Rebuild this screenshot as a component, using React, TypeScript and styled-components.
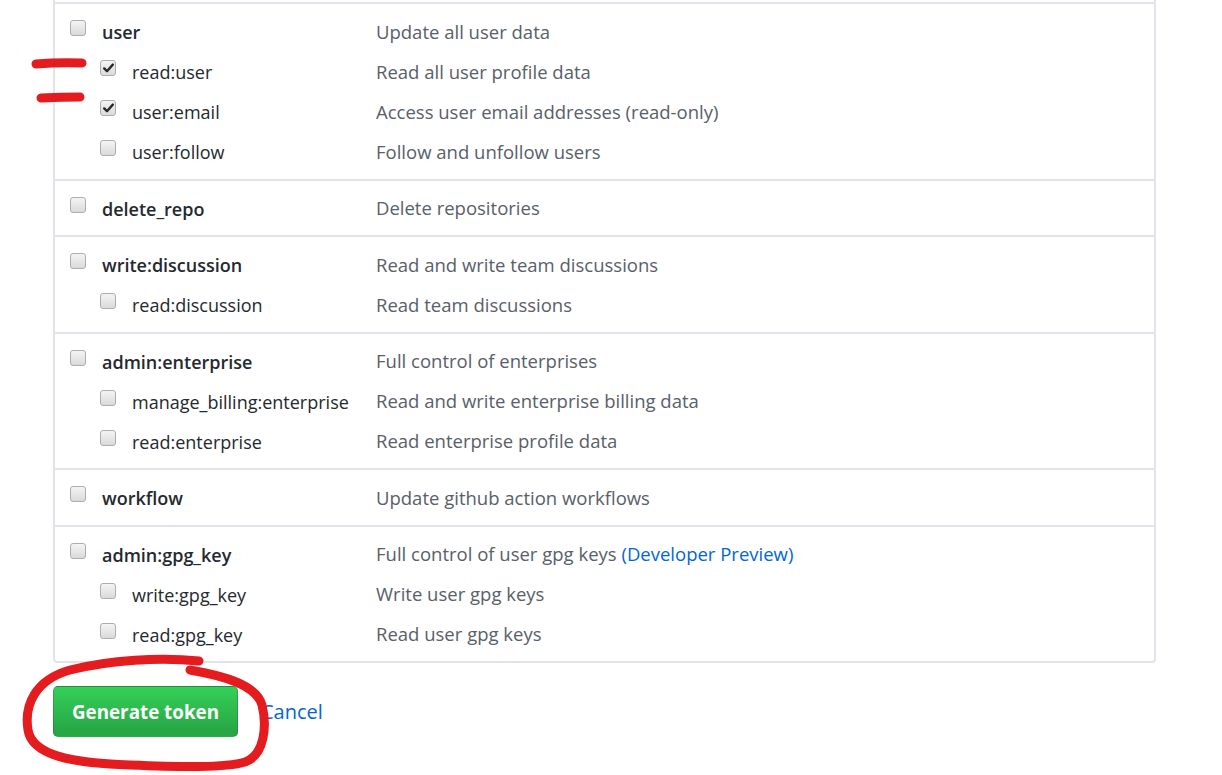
import React from "react";
import styled, { createGlobalStyle } from "styled-components";

const GlobalStyle = createGlobalStyle`
  html, body { margin: 0; padding: 0; background: #fff; }
  body { font-family: "Open Sans", "Noto Sans", Arial, sans-serif; color: #24292e; }
`;

const Page = styled.div`
  position: relative;
  width: 1222px;
  height: 775px;
  overflow: hidden;
  padding-left: 53px;
  box-sizing: border-box;
`;

const Box = styled.div`
  width: 1103px;
  box-sizing: border-box;
  border: 2px solid #e1e4e8;
  border-top: none;
  border-radius: 0 0 4px 4px;
  padding-top: 2px;
`;

const Section = styled.div<{ $first?: boolean }>`
  padding: 8px 0 6.5px;
  border-top: ${(p) => (p.$first ? "2px solid #e1e4e8" : "none")};
  border-bottom: 2px solid #e1e4e8;
  &:last-child { border-bottom: none; }
`;

const Row = styled.div`
  display: grid;
  grid-template-columns: 321px 1fr;
  height: 40px;
  align-items: center;
  font-size: 18px;
`;

const NameCell = styled.div<{ $sub?: boolean }>`
  display: flex;
  align-items: center;
  padding-left: ${(p) => (p.$sub ? 45 : 15)}px;
  height: 100%;
`;

const Box16 = styled.span<{ $checked?: boolean }>`
  display: inline-flex;
  align-items: center;
  justify-content: center;
  flex: none;
  width: 16px;
  height: 16px;
  box-sizing: border-box;
  border: 1px solid #adadad;
  border-radius: 3px;
  background: linear-gradient(#f4f4f4, #dadada);
  margin-top: -8px;
  margin-right: 16px;
`;

const Name = styled.span<{ $sub?: boolean }>`
  font-weight: ${(p) => (p.$sub ? 400 : 600)};
  color: #24292e;
  white-space: nowrap;
`;

const Desc = styled.span`
  color: #586069;
  font-size: 18.5px;
  white-space: nowrap;
  margin-top: -2px;
`;

const Link = styled.a`
  color: #0366d6;
  text-decoration: none;
`;

const Actions = styled.div`
  display: flex;
  align-items: center;
  gap: 23px;
  margin-top: 23px;
`;

const GreenButton = styled.button`
  width: 185px;
  height: 51px;
  box-sizing: border-box;
  border: 1px solid rgba(27, 31, 35, 0.2);
  border-radius: 5px;
  background: linear-gradient(-180deg, #34d058 0%, #28a745 90%);
  color: #fff;
  font-family: inherit;
  font-size: 18.8px;
  font-weight: 700;
  padding: 0;
  cursor: pointer;
`;

const CancelLink = styled.a`
  color: #0366d6;
  font-size: 20px;
  text-decoration: none;
`;

const Annotation = styled.svg`
  position: absolute;
  left: 0;
  top: 0;
  pointer-events: none;
`;

type Scope = { name: string; desc: React.ReactNode; checked?: boolean };
type Group = { main: Scope; subs: Scope[] };

const groups: Group[] = [
  {
    main: { name: "user", desc: "Update all user data" },
    subs: [
      { name: "read:user", desc: "Read all user profile data", checked: true },
      { name: "user:email", desc: "Access user email addresses (read-only)", checked: true },
      { name: "user:follow", desc: "Follow and unfollow users" },
    ],
  },
  { main: { name: "delete_repo", desc: "Delete repositories" }, subs: [] },
  {
    main: { name: "write:discussion", desc: "Read and write team discussions" },
    subs: [{ name: "read:discussion", desc: "Read team discussions" }],
  },
  {
    main: { name: "admin:enterprise", desc: "Full control of enterprises" },
    subs: [
      { name: "manage_billing:enterprise", desc: "Read and write enterprise billing data" },
      { name: "read:enterprise", desc: "Read enterprise profile data" },
    ],
  },
  { main: { name: "workflow", desc: "Update github action workflows" }, subs: [] },
  {
    main: {
      name: "admin:gpg_key",
      desc: (
        <>
          Full control of user gpg keys <Link href="#">(Developer Preview)</Link>
        </>
      ),
    },
    subs: [
      { name: "write:gpg_key", desc: "Write user gpg keys" },
      { name: "read:gpg_key", desc: "Read user gpg keys" },
    ],
  },
];

const Check = () => (
  <svg width="11" height="10" viewBox="0 0 11 10">
    <path d="M1.2 5.4 L4 8.2 L9.8 1.6" fill="none" stroke="#2a2a2a" strokeWidth="2.4" strokeLinecap="round" strokeLinejoin="round" />
  </svg>
);

const ScopeRow = ({ scope, sub }: { scope: Scope; sub?: boolean }) => (
  <Row>
    <NameCell $sub={sub}>
      <Box16 $checked={scope.checked}>{scope.checked && <Check />}</Box16>
      <Name $sub={sub}>{scope.name}</Name>
    </NameCell>
    <Desc>{scope.desc}</Desc>
  </Row>
);

export default function App() {
  return (
    <>
      <GlobalStyle />
      <Page>
        <Box>
          {groups.map((g, i) => (
            <Section key={g.main.name} $first={i === 0}>
              <ScopeRow scope={g.main} />
              {g.subs.map((s) => (
                <ScopeRow key={s.name} scope={s} sub />
              ))}
            </Section>
          ))}
        </Box>
        <Actions>
          <GreenButton>Generate token</GreenButton>
          <CancelLink href="#">Cancel</CancelLink>
        </Actions>
        <Annotation width="1222" height="775" viewBox="0 0 1222 775">
          <g fill="none" stroke="#e41c1f" strokeWidth="9" strokeLinecap="round" strokeLinejoin="round">
            <path d="M36 64 Q60 62 82 63" />
            <path d="M41 98 Q62 97 80 97" />
            <path d="M199 661 C160 657 110 660 70 670 C35 680 24 705 28 730 C32 755 70 763 130 765 C180 767 225 768 245 762 C265 755 267 725 262 705 C256 685 225 676 190 670" />
          </g>
        </Annotation>
      </Page>
    </>
  );
}
